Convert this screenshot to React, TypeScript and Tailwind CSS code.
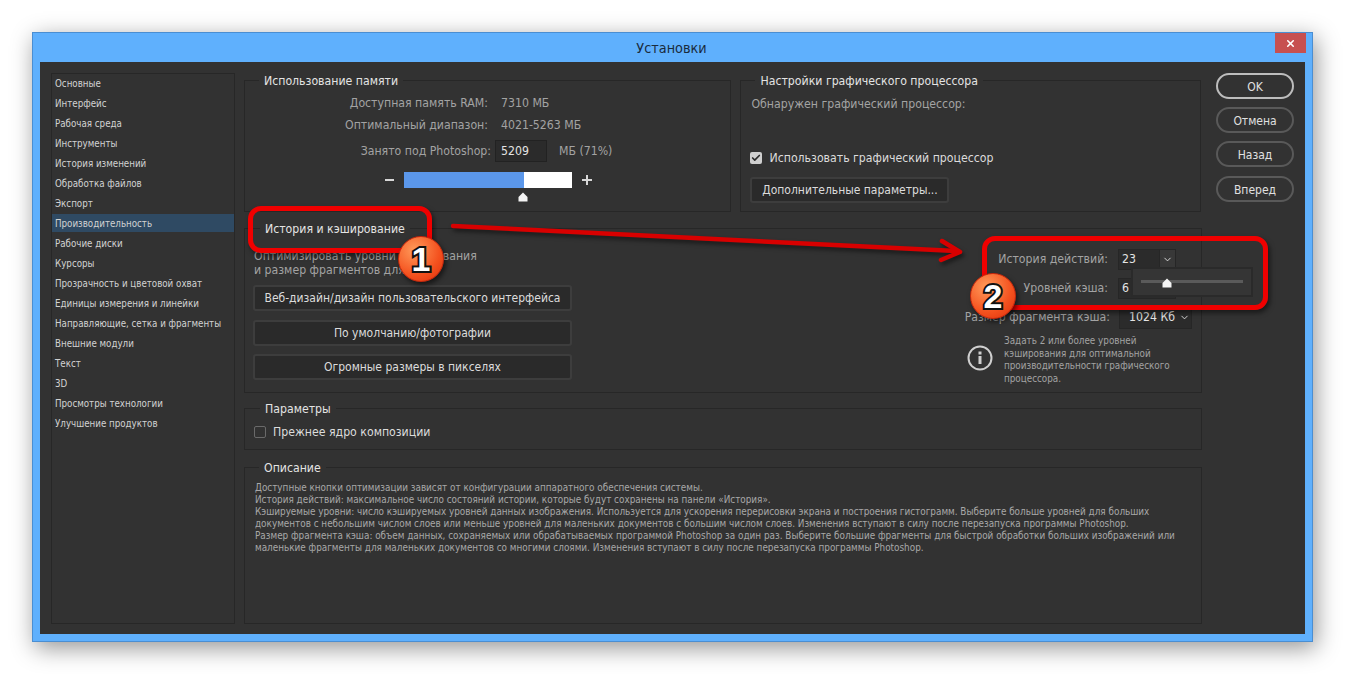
import { Check, ChevronDown, X } from 'lucide-react';
import type { ReactNode } from 'react';

const sections = [
  'Основные', 'Интерфейс', 'Рабочая среда', 'Инструменты', 'История изменений', 'Обработка файлов', 'Экспорт',
  'Производительность', 'Рабочие диски', 'Курсоры', 'Прозрачность и цветовой охват', 'Единицы измерения и линейки',
  'Направляющие, сетка и фрагменты', 'Внешние модули', 'Текст', '3D', 'Просмотры технологии', 'Улучшение продуктов',
];

const description = [
  'Доступные кнопки оптимизации зависят от конфигурации аппаратного обеспечения системы.',
  'История действий: максимальное число состояний истории, которые будут сохранены на панели «История».',
  'Кэшируемые уровни: число кэшируемых уровней данных изображения. Используется для ускорения перерисовки экрана и построения гистограмм. Выберите больше уровней для больших',
  'документов с небольшим числом слоев или меньше уровней для маленьких документов с большим числом слоев. Изменения вступают в силу после перезапуска программы Photoshop.',
  'Размер фрагмента кэша: объем данных, сохраняемых или обрабатываемых программой Photoshop за один раз. Выберите большие фрагменты для быстрой обработки больших изображений или',
  'маленькие фрагменты для маленьких документов со многими слоями. Изменения вступают в силу после перезапуска программы Photoshop.',
];

function Group({ title, className, titleClass, children }: { title: string; className: string; titleClass?: string; children: ReactNode }) {
  return (
    <fieldset className={`border border-[#272727] min-w-0 ${className}`}>
      <legend className={`ml-[14px] translate-y-[1px] px-[5px] text-[12.2px] leading-[16px] text-[#e4e4e4] ${titleClass ?? ''}`}>{title}</legend>
      {children}
    </fieldset>
  );
}

function WideButton({ label }: { label: string }) {
  return (
    <button className="flex h-[26px] w-[319px] items-center justify-center rounded-[3px] border-2 border-[#3d3d3d] bg-[#2a2a2a] text-[12px] text-[#dcdcdc]">
      {label}
    </button>
  );
}

function DialogButton({ label, primary }: { label: string; primary?: boolean }) {
  return (
    <button className={`flex h-[26px] w-[78px] items-center justify-center rounded-full pt-[1px] text-[12px] text-[#e0e0e0] ${primary ? 'border-2 border-[#bdbdbd]' : 'border-2 border-[#595959]'}`}>
      {label}
    </button>
  );
}

function Thumb({ className }: { className: string }) {
  return (
    <svg viewBox="0 0 10 10" className={className}>
      <path d="M5 0.5 L9.5 5 V9.5 H0.5 V5 Z" fill="#f4f4f4" />
    </svg>
  );
}

function Badge({ n, className }: { n: string; className: string }) {
  return (
    <div className={`absolute flex h-[46px] w-[46px] items-center justify-center rounded-full border border-[#c9260a] bg-[radial-gradient(circle_at_35%_30%,#ff9a5a,#f4511e_60%,#dc2f0c)] text-[34px] font-bold text-white shadow-[2px_3px_5px_rgba(0,0,0,0.55)] [-webkit-text-stroke:4px_#111] [paint-order:stroke_fill] font-['Liberation_Sans',sans-serif] ${className}`}>
      {n}
    </div>
  );
}

export default function App() {
  return (
    <div className="h-[674px] w-[1345px] bg-white pl-[32px] pt-[32px] font-['DejaVu_Sans_Condensed','Noto_Sans',sans-serif]">
      <div className="relative flex h-[610px] w-[1281px] flex-col border border-[#4a8ed2] bg-[#5fb0fd] shadow-[3px_6px_22px_rgba(0,0,0,0.42)]">
        {/* Title bar */}
        <div className="flex h-[29px] shrink-0 items-start justify-between pl-[7px] pr-[6px]">
          <div className="flex-1 pl-[28px] pt-[5px] text-center text-[14.3px] leading-[20px] text-[#1a2b3c]">Установки</div>
          <button className="flex h-[20px] w-[31px] items-center justify-center bg-[#c75050] text-white">
            <X size={11} strokeWidth={3.5} />
          </button>
        </div>

        {/* Dialog body */}
        <div className="mx-[7px] mb-[7px] flex min-h-0 flex-1 gap-[9px] bg-[#323232] pl-[11px] pt-[11px] text-[12.2px] text-[#a3a3a3]">
          <nav className="h-[551px] w-[184px] shrink-0 border border-[#272727]">
            {sections.map((label) => (
              <div
                key={label}
                className={`flex items-center whitespace-nowrap pl-[3px] text-[9.7px] text-[#d2d2d2] ${label === 'Производительность' ? 'mb-[2px] h-[18px] bg-[#2f4a63] pt-[3px]' : 'h-[20px] pt-[1px]'}`}
              >
                {label}
              </div>
            ))}
          </nav>

          <div className="flex w-[957px] shrink-0 flex-col">
            <div className="flex gap-[9px]">
              <Group title="Использование памяти" className="h-[140px] w-[488px] -mt-[1px]">
                <div className="grid grid-cols-[243px_auto] items-center gap-x-[13px] pt-[4px] leading-[16px]">
                  <span className="h-[22px] pt-[3px] text-right">Доступная память RAM:</span>
                  <span className="h-[22px] pt-[3px]">7310 МБ</span>
                  <span className="h-[22px] pt-[3px] text-right">Оптимальный диапазон:</span>
                  <span className="h-[22px] pt-[3px]">4021-5263 МБ</span>
                </div>
                <div className="mt-[4px] flex items-center pl-[100px]">
                  <span className="w-[146px] whitespace-nowrap text-right">Занято под Photoshop:</span>
                  <div className="ml-[4px] flex h-[22px] w-[52px] items-center border border-[#222] bg-[#2b2b2b] pl-[5px] text-[#e4e4e4]">5209</div>
                  <span className="ml-[12px]">МБ (71%)</span>
                </div>
                <div className="flex items-center pl-[140px] pt-[10px]">
                  <span className="h-[2px] w-[9px] bg-[#d8d8d8]" />
                  <div className="ml-[10px] flex h-[16px] w-[168px]">
                    <div className="w-[120px] bg-[#5b97ea]" />
                    <div className="flex-1 bg-white" />
                  </div>
                  <span className="relative ml-[10px] h-[10px] w-[10px]">
                    <span className="absolute left-0 top-[4px] h-[2px] w-[10px] bg-[#d8d8d8]" />
                    <span className="absolute left-[4px] top-0 h-[10px] w-[2px] bg-[#d8d8d8]" />
                  </span>
                </div>
                <div className="pl-[273px] pt-[4px]">
                  <Thumb className="h-[10px] w-[10px]" />
                </div>
              </Group>

              <Group title="Настройки графического процессора" className="h-[140px] w-[461px] -mt-[1px]">
                <div className="px-[10px] pt-[8px] leading-[16px]">Обнаружен графический процессор:</div>
                <div className="flex items-center gap-[7px] pl-[9px] pt-[37px] text-[#dcdcdc]">
                  <span className="flex h-[12px] w-[12px] items-center justify-center rounded-[2px] bg-[#cfcfcf] text-[#2a2a2a]">
                    <Check size={10} strokeWidth={4} />
                  </span>
                  Использовать графический процессор
                </div>
                <button className="ml-[9px] mt-[10px] flex h-[26px] w-[199px] items-center justify-center rounded-[3px] border-2 border-[#3d3d3d] bg-[#2a2a2a] text-[12px] text-[#dcdcdc]">
                  Дополнительные параметры...
                </button>
              </Group>
            </div>

            <Group title="История и кэширование" className="relative mt-[8px] h-[173px] w-[958px]" titleClass="ml-[15px]">
              <div className="flex justify-between">
                <div className="pl-[8px] pt-[13px]">
                  <p className="pl-[1px] leading-[14px]">Оптимизировать уровни кэширования</p>
                  <p className="pl-[1px] leading-[14px]">и размер фрагментов для:</p>
                  <div className="mt-[8px] flex flex-col gap-[8.5px]">
                    <WideButton label="Веб-дизайн/дизайн пользовательского интерфейса" />
                    <WideButton label="По умолчанию/фотографии" />
                    <WideButton label="Огромные размеры в пикселях" />
                  </div>
                </div>

                <div className="relative mr-[9px] w-[236px] pt-[9px]">
                  <div className="flex h-[29px] items-center justify-end gap-[10px] whitespace-nowrap">
                    История действий:
                    <div className="relative mr-[16px] flex h-[21px] w-[58px] items-center border border-[#262626] bg-[#2b2b2b] pl-[3px] text-[#e4e4e4]">
                      23
                      <span className="absolute right-0 top-0 flex h-full w-[16px] items-center justify-center border-l border-[#262626] bg-[#383838]">
                        <ChevronDown size={11} />
                      </span>
                    </div>
                  </div>
                  <div className="flex h-[29px] items-center justify-end gap-[10px] whitespace-nowrap">
                    Уровней кэша:
                    <div className="mr-[16px] flex h-[21px] w-[58px] items-center border border-[#262626] bg-[#2b2b2b] pl-[3px] text-[#e4e4e4]">6</div>
                  </div>
                  <div className="flex h-[29px] items-center justify-end gap-[9px] whitespace-nowrap">
                    Размер фрагмента кэша:
                    <div className="flex h-[22px] w-[73px] items-center border border-[#262626] bg-[#2b2b2b] pl-[9px] text-[#e4e4e4]">
                      1024 Кб
                      <ChevronDown size={11} className="ml-[4px]" />
                    </div>
                  </div>
                  <div className="flex gap-[11px] pl-[11px] pt-[3px]">
                    <svg viewBox="0 0 26 26" className="mt-[10px] h-[26px] w-[26px] shrink-0">
                      <circle cx="13" cy="13" r="11.5" fill="none" stroke="#cfcfcf" strokeWidth="2" />
                      <rect x="11.5" y="11" width="3" height="8" fill="#cfcfcf" />
                      <rect x="11.5" y="6.5" width="3" height="3" fill="#cfcfcf" />
                    </svg>
                    <p className="text-[9.8px] leading-[12.5px]">Задать 2 или более уровней кэширования для оптимальной производительности графического процессора.</p>
                  </div>

                  {/* Opened slider of the history dropdown */}
                  <div className="absolute left-[175px] top-[31px] h-[30px] w-[122px] border-2 border-[#2a2a2a] bg-[#353535]">
                    <div className="absolute left-[8px] top-[11px] h-[3px] w-[102px] bg-[#5a5a5a]" />
                    <Thumb className="absolute left-[29px] top-[9px] h-[10px] w-[10px]" />
                  </div>
                </div>
              </div>
            </Group>

            <Group title="Параметры" className="mt-[7px] h-[50px] w-[958px]" titleClass="ml-[15px]">
              <div className="flex items-center gap-[7px] pl-[9px] pt-[7px] text-[#dcdcdc]">
                <span className="h-[12px] w-[12px] rounded-[2px] border border-[#6a6a6a]" />
                Прежнее ядро композиции
              </div>
            </Group>

            <Group title="Описание" className="mt-[9px] h-[165px] w-[958px]">
              <div className="pl-[10px] pt-[7px] text-[9.86px] leading-[12px] text-[#a8a8a8]">
                {description.map((line) => (
                  <p key={line} className="whitespace-nowrap">{line}</p>
                ))}
              </div>
            </Group>
          </div>

          <div className="ml-[6px] flex flex-col">
            <DialogButton label="OK" primary />
            <div className="mt-[8px]"><DialogButton label="Отмена" /></div>
            <div className="mt-[8px]"><DialogButton label="Назад" /></div>
            <div className="mt-[9px]"><DialogButton label="Вперед" /></div>
          </div>
        </div>

        {/* Annotations drawn over the dialog */}
        <div className="absolute left-[215px] top-[173px] h-[47px] w-[184px] rounded-[13px] border-[5px] border-[#f00000] shadow-[2px_3px_5px_rgba(0,0,0,0.5)]" />
        <div className="absolute left-[949px] top-[203px] h-[74px] w-[286px] rounded-[13px] border-[5px] border-[#f00000] shadow-[2px_3px_5px_rgba(0,0,0,0.5)]" />
        <svg className="pointer-events-none absolute left-[-33px] top-[-33px] h-[674px] w-[1345px]" viewBox="0 0 1345 674">
          <g fill="none" stroke="#d80000" strokeLinecap="round" strokeLinejoin="round" strokeWidth="4.5" className="drop-shadow-[2px_3px_2px_rgba(0,0,0,0.5)]">
            <path d="M453 226 L956 251" />
            <path d="M942 241 L960 252 L941 260" />
          </g>
        </svg>
        <Badge n="1" className="left-[365px] top-[203px]" />
        <Badge n="2" className="left-[937px] top-[240px]" />
      </div>
    </div>
  );
}
